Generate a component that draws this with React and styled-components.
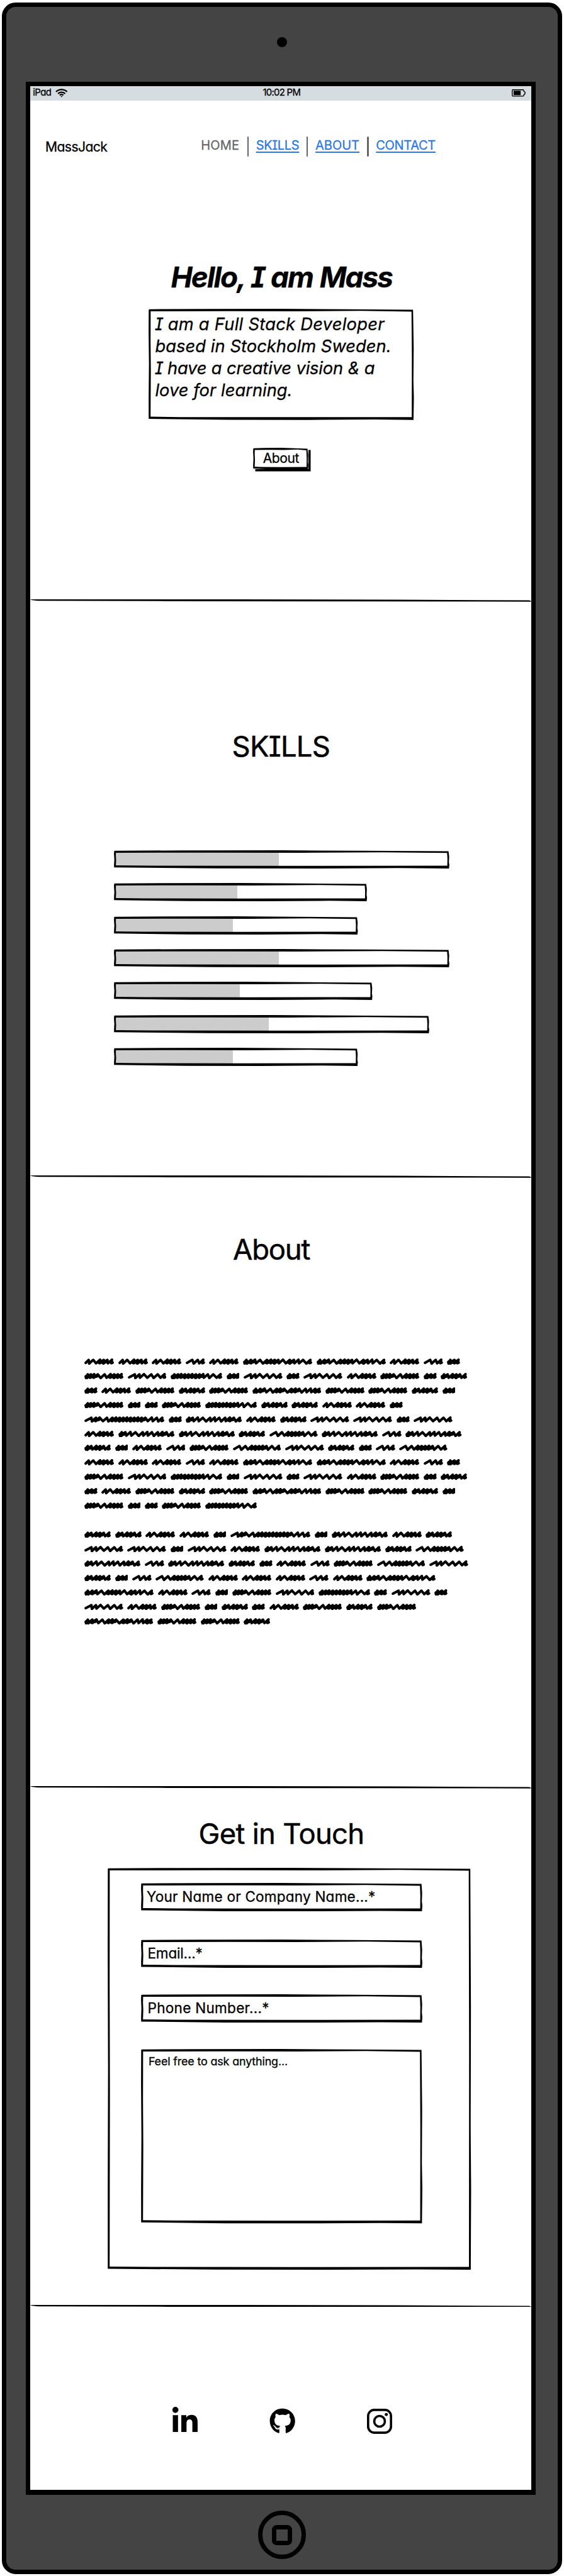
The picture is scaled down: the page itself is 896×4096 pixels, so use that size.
import React from "react";
import styled, { createGlobalStyle, css } from "styled-components";
import { FaGithub, FaLinkedinIn } from "react-icons/fa";

const SCALE = 0.727;
const u = (n) => `${+(n * SCALE).toFixed(2)}px`;

const GlobalStyle = createGlobalStyle`
  *, *::before, *::after { box-sizing: border-box; }
  body {
    margin: 0;
    background: #fff;
    color: #000;
    font-family: Inter, Lato, sans-serif;
    font-feature-settings: "cv11", "cv08", "calt" 0;
    -webkit-text-stroke: 0.3px currentColor;
  }
  h1, h2 { margin: 0; padding: 0; font-weight: 400; }
`;

const Page = styled.div`
  width: 896px;
  height: 4096px;
  padding: ${u(6)} ${u(4)} ${u(4)};
`;

const Device = styled.div`
  height: 100%;
  display: flex;
  flex-direction: column;
  background: #444;
  border: 7px solid #000;
  border-radius: ${u(30)};
`;

const TopBezel = styled.div`
  flex: none;
  height: 118.3px;
  padding-bottom: ${u(10)};
  display: flex;
  align-items: center;
  justify-content: center;
`;

const Camera = styled.div`
  width: ${u(22)};
  height: ${u(22)};
  border-radius: 50%;
  background: #000;
`;

const Screen = styled.main`
  flex: none;
  height: 3837.5px;
  margin: 0 35.5px 0 31.1px;
  border: 7px solid #000;
  border-bottom-width: 8px;
  background: #fff;
`;

const BottomBezel = styled.div`
  flex: 1;
  display: flex;
  align-items: center;
  justify-content: center;
  padding-top: ${u(11)};
`;

const HomeButton = styled.div`
  width: ${u(105)};
  height: ${u(105)};
  border: 7px solid #000;
  border-radius: 50%;
  display: flex;
  align-items: center;
  justify-content: center;
`;

const HomeGlyph = styled.div`
  width: ${u(44)};
  height: ${u(44)};
  border: 7px solid #000;
  border-radius: ${u(10)};
`;

const StatusBar = styled.div`
  height: ${u(32)};
  padding: 0 ${u(2)} 0 ${u(6)};
  display: grid;
  grid-template-columns: 1fr auto 1fr;
  align-items: center;
  background: #d6dde0;
  font-size: ${u(20.5)};
  line-height: ${u(30)};
`;

const Carrier = styled.div`
  display: flex;
  align-items: center;
  gap: ${u(9)};
`;

const BatterySlot = styled.div`
  display: flex;
  justify-content: flex-end;
  padding-right: ${u(10)};
`;

const Section = styled.section`
  height: ${(p) => u(p.$height)};
  display: flex;
  flex-direction: column;
`;

const NavBar = styled.header`
  margin-top: ${u(78)};
  height: ${u(44)};
  display: flex;
  align-items: center;
`;

const Brand = styled.div`
  width: ${u(373)};
  padding: ${u(2)} 0 0 ${u(33)};
  font-size: ${u(29)};
`;

const NavLinks = styled.nav`
  display: flex;
  align-items: center;
`;

const NavLink = styled.a`
  width: ${(p) => u(p.$width)};
  margin-top: ${u(-3)};
  font-size: ${u(27.5)};
  line-height: ${u(36)};
  white-space: nowrap;
  color: #666;
  ${(p) =>
    p.$active &&
    css`
      color: #2b78e4;
      text-decoration: underline;
      text-decoration-thickness: 2px;
      text-underline-offset: ${u(3.6)};
      text-decoration-skip-ink: none;
    `}
`;

const NavRule = styled.span`
  width: ${u(3.4)};
  height: ${u(44)};
  margin: 0 ${u(16)} 0 ${u(17.5)};
  border-radius: 2px;
  background: #666;
`;

const Tracked = styled.span`
  white-space: pre;
  letter-spacing: ${(p) => p.$by}px;
`;

const HeroTitle = styled.h1`
  margin-top: ${u(225)};
  text-align: center;
  padding-left: ${u(4)};
  font-size: ${u(63)};
  font-weight: 700;
  font-style: italic;
  line-height: ${u(80)};
  word-spacing: 2px;
`;

const Sketched = styled.div`
  position: relative;
  flex: none;
  width: ${(p) => u(p.$w)};
  height: ${(p) => u(p.$h)};
`;

const SketchSvg = styled.svg`
  position: absolute;
  inset: 0;
  width: 100%;
  height: 100%;
  overflow: visible;
  pointer-events: none;
`;

/* Slightly wobbly pen outline of a box. */
function SketchOutline({ w, h, t }) {
  const outer = `M1.5 1 L${w * 0.2} .3 L${w * 0.5} 0 L${w * 0.75} 1.2 L${w - 2} 2
    L${w - 0.6} ${h * 0.35} L${w - 1.2} ${h * 0.65} L${w - 0.2} ${h * 0.8} L${w - 1} ${h}
    L${w * 0.85} ${h - 0.8} L${w * 0.6} ${h} L${w * 0.3} ${h - 0.2} L0.3 ${h - 2.2}
    L0.2 ${h * 0.8} L0.9 ${h * 0.5} L0.1 ${h * 0.2} L0.4 2 Z`;
  const inner = `M${t} ${t + 1} L${w * 0.3} ${t + 0.7} L${w * 0.55} ${t + 1} L${w * 0.8} ${t} L${w - t - 0.8} ${t + 1.6}
    L${w - t} ${h * 0.45} L${w - t - 0.3} ${h - t - 1.6} L${w * 0.5} ${h - t - 1.4} L${w * 0.12} ${h - t - 1.6}
    L${t - 0.2} ${h - t - 2.4} L${t + 0.4} ${h * 0.55} L${t - 0.2} ${h * 0.3} Z`;
  return (
    <SketchSvg viewBox={`0 0 ${w} ${h}`} preserveAspectRatio="none" aria-hidden="true">
      <path d={`${outer} ${inner}`} fillRule="evenodd" />
    </SketchSvg>
  );
}

const BioBox = styled(Sketched)`
  margin: ${u(29)} 0 0 ${u(259)};
  padding: ${u(9)} 0 0 ${u(14)};
  font-size: ${u(37.5)};
  font-style: italic;
  line-height: ${u(48.3)};
`;

const BioLine = styled.div`
  white-space: pre;
`;

const AboutButton = styled(Sketched)`
  margin: ${u(60)} 0 0 ${u(487.5)};
  display: flex;
  align-items: center;
  justify-content: center;
  background: #fff;
  box-shadow: ${u(4.8)} ${u(4.8)} 0 #000;
  font-size: ${u(29)};
`;

const Heading = styled.h2`
  margin-top: ${(p) => u(p.$top)};
  padding-left: ${(p) => u(p.$left)};
  font-size: ${u(62.5)};
  line-height: ${u(80)};
  white-space: nowrap;
  -webkit-text-stroke-width: 0.5px;
`;

const RuleSvg = styled.svg`
  display: block;
  width: 100%;
  height: ${u(5)};
`;

function Divider() {
  return (
    <RuleSvg viewBox="0 0 1094 5" preserveAspectRatio="none" aria-hidden="true">
      <path d="M0 0 L450 0 L800 .7 L1090 2.2 L1094 3.4 L1094 5 L700 4.4 L300 4 L16 3.2 L4 1.8 Z" />
    </RuleSvg>
  );
}

const Bars = styled.div`
  margin: ${u(187)} 0 0 ${u(182.3)};
  display: flex;
  flex-direction: column;
  gap: ${u(32.2)};
`;

const Bar = styled(Sketched)`
  padding: ${u(4)} ${u(4)};
`;

const BarFill = styled.div`
  height: 100%;
  background: #ccc;
`;

/* Outer width and fill extent of each skill bar. */
const SKILLS = [
  [733.2, 360.7],
  [553.3, 270.6],
  [533.2, 260.5],
  [733.2, 360.7],
  [565, 276.4],
  [689.2, 338.5],
  [533.2, 260.5],
];

/* Scribbled filler words: width and the x of every pen peak. */
const WORDS = {
  a: [64.9, [10, 20, 35, 43, 51, 61]],
  b: [42.5, [15, 27, 39]],
  c: [151.5, [8, 18, 27, 38, 53, 62, 70, 78, 88, 103, 112, 122, 132, 148]],
  d: [28.7, [8, 17, 26]],
  e: [85.5, [8, 15, 22, 30, 45, 58, 66, 74, 82]],
  f: [85, [16, 26, 36, 52, 66, 81]],
  g: [113, [9, 17, 24, 32, 40, 48, 56, 64, 72, 82, 94, 110]],
  h: [58, [8, 16, 27, 35, 43, 55]],
  i: [150.5, [8, 18, 27, 40, 54, 62, 70, 86, 95, 103, 117, 128, 138, 147]],
  j: [175, [16, 26, 34, 50, 62, 70, 78, 86, 94, 102, 110, 118, 126, 134, 148, 159, 171]],
  k: [123, [8, 16, 27, 38, 54, 64, 74, 87, 97, 106, 119]],
  l: [105.6, [15, 28, 42, 50, 58, 66, 74, 86, 101]],
};

const PARAGRAPHS = [
  [
    "aaabaccabd",
    "efgdfdfaedh",
    "daeheieehd",
    "eddeghhaad",
    "jdkahffdf",
    "akkhlkbk",
    "hdabelfhdbl",
    "aaabaccabd",
    "efgdfdfaedh",
    "daeheieehd",
    "eddeg",
  ],
  ["hhaadjdkah", "ffdfakkhl", "kbkhdabelf", "hdblaaabac", "cabdefgdfd", "faedhdaehe", "ieeh"],
];

const ScribbleBlock = styled.div`
  margin: ${u(189)} 0 0 ${u(118.3)};
  display: flex;
  flex-direction: column;
  gap: ${u(31.6)};
`;

const ScribbleLine = styled.div`
  height: ${u(31.6)};
  display: flex;
  align-items: center;
  gap: ${u(8.9)};
`;

const WordSvg = styled.svg`
  flex: none;
  height: ${u(14)};
  width: ${(p) => u(p.$w)};
`;

function ScribbleWord({ kind }) {
  const [w, peaks] = WORDS[kind];
  const dense = peaks[0] < 10;
  let line = dense ? "M3.6 11 L3.6 9" : "M3 9.6";
  let blob = dense ? "M4.5 8 L8 7" : "";
  peaks.forEach((x, i) => {
    const prev = i ? peaks[i - 1] : 0;
    if (i) line += ` L${Math.max(x - 9.5, prev - 5)} ${i % 3 === 1 ? 11.2 : 10.6}`;
    line += ` L${x - 0.6} ${i % 3 === 2 ? 2.8 : 3.2}`;
    if (i && x - prev < 9.5) blob += ` M${prev - 3} 8 L${x - 3} 6.6`;
  });
  line += ` L${w - 6} 10.4 L${w - 3} 9`;
  return (
    <WordSvg $w={w} viewBox={`0 0 ${w} 14`} aria-hidden="true">
      <g fill="none" stroke="#000" strokeLinecap="round" strokeLinejoin="round">
        <path d={line} strokeWidth="5.6" />
        <path d={blob} strokeWidth="8.4" />
      </g>
    </WordSvg>
  );
}

const ContactForm = styled(Sketched)`
  margin: ${u(35)} 0 0 ${u(169)};
  padding: ${u(32)} 0 0 ${u(73.5)};
`;

const Field = styled(Sketched)`
  margin-bottom: ${(p) => u(p.$gap)};
  padding: ${u(9.5)} 0 0 ${(p) => u(p.$indent)};
  font-size: ${u(31)};
  line-height: ${u(40)};
  white-space: nowrap;
`;

const MessageField = styled(Sketched)`
  padding: ${u(11)} 0 0 ${u(16)};
  font-size: ${u(24.6)};
  line-height: ${u(32)};
  white-space: nowrap;
`;

const Socials = styled.div`
  margin: ${u(222)} 0 0 ${u(310)};
  height: ${u(56)};
  display: flex;
  align-items: center;
  gap: ${u(157)};
`;

const SocialLink = styled.a`
  flex: none;
  width: ${u(56)};
  height: ${u(56)};
  display: flex;
  align-items: center;
  justify-content: center;
  color: #000;
  svg { display: block; flex: none; }
`;

function WifiIcon() {
  return (
    <svg width={27 * SCALE} height={19 * SCALE} viewBox="0 0 27 19" fill="none" stroke="#000" strokeWidth="3.2" aria-hidden="true">
      <path d="M1.4 6.8 C8 .2 19 .2 25.6 6.8" />
      <path d="M5.6 10.8 C10 6.6 17 6.6 21.4 10.8" />
      <path d="M9.4 14.4 C11.8 12.2 15.2 12.2 17.6 14.4" />
      <path d="M11.2 16.2 L13.5 18.8 L15.8 16.2 Z" fill="#000" stroke="none" />
    </svg>
  );
}

function BatteryIcon() {
  return (
    <svg width={30 * SCALE} height={16 * SCALE} viewBox="0 0 30 16" aria-hidden="true">
      <path d="M2 1 H25 L26.5 3 V4.5 L29 6 V10 L26.5 11.5 V13.5 L25 15 H2 L1 13 V3 Z" fill="none" stroke="#000" strokeWidth="1.9" />
      <rect x="4" y="3.2" width="15.5" height="9.6" />
    </svg>
  );
}

function InstagramIcon() {
  return (
    <svg width={55 * SCALE} height={55 * SCALE} viewBox="0 0 55 55" fill="none" stroke="#000" strokeWidth="5" aria-hidden="true">
      <rect x="2.5" y="2.5" width="50" height="50" rx="13.5" />
      <circle cx="27.5" cy="27.5" r="11.7" />
      <circle cx="42.2" cy="12.8" r="3.4" fill="#000" stroke="none" />
    </svg>
  );
}

export default function App() {
  return (
    <>
      <GlobalStyle />
      <Page>
        <Device>
          <TopBezel>
            <Camera />
          </TopBezel>
          <Screen>
            <StatusBar>
              <Carrier>
                <Tracked $by={-0.6}>iPad</Tracked>
                <WifiIcon />
              </Carrier>
              <Tracked $by={-0.7}>10:02 PM</Tracked>
              <BatterySlot>
                <BatteryIcon />
              </BatterySlot>
            </StatusBar>

            <Section $height={1091}>
              <NavBar>
                <Brand><Tracked $by={-0.55}>MassJack</Tracked></Brand>
                <NavLinks>
                  <NavLink $width={83.5}><Tracked $by={0.2}>HOME</Tracked></NavLink>
                  <NavRule />
                  <NavLink $active $width={93}><Tracked $by={-0.3}>SKILLS</Tracked></NavLink>
                  <NavRule />
                  <NavLink $active $width={95.5}><Tracked $by={0}>ABOUT</Tracked></NavLink>
                  <NavRule />
                  <NavLink $active $width={131}><Tracked $by={-0.3}>CONTACT</Tracked></NavLink>
                </NavLinks>
              </NavBar>
              <HeroTitle><Tracked $by={-1.9}>Hello, I am Mass</Tracked></HeroTitle>
              <BioBox $w={580} $h={243}>
                <SketchOutline w={580} h={243} t={4.6} />
                <BioLine><Tracked $by={0.29}>I am a Full Stack Developer</Tracked></BioLine>
                <BioLine><Tracked $by={0.08}>based in Stockholm Sweden.</Tracked></BioLine>
                <BioLine><Tracked $by={-0.12}>I have a creative vision &amp; a</Tracked></BioLine>
                <BioLine><Tracked $by={0.04}>love for learning.</Tracked></BioLine>
              </BioBox>
              <AboutButton $w={121} $h={47.5}>
                <SketchOutline w={121} h={47.5} t={3.8} />
                <Tracked $by={-0.4}>About</Tracked>
              </AboutButton>
            </Section>
            <Divider />

            <Section $height={1255}>
              <Heading $top={277} $left={441}><Tracked $by={-0.8}>SKILLS</Tracked></Heading>
              <Bars>
                {SKILLS.map(([w, fill], i) => (
                  <Bar key={i} $w={w} $h={39.8}>
                    <BarFill style={{ width: u(fill - 4) }} />
                    <SketchOutline w={w} h={39.8} t={4.4} />
                  </Bar>
                ))}
              </Bars>
            </Section>
            <Divider />

            <Section $height={1331}>
              <Heading $top={117} $left={443}><Tracked $by={-1.2}>About</Tracked></Heading>
              <ScribbleBlock>
                {PARAGRAPHS.map((lines, i) => (
                  <div key={i}>
                    {lines.map((line, j) => (
                      <ScribbleLine key={j}>
                        {[...line].map((kind, k) => (
                          <ScribbleWord key={k} kind={kind} />
                        ))}
                      </ScribbleLine>
                    ))}
                  </div>
                ))}
              </ScribbleBlock>
            </Section>
            <Divider />

            <Section $height={1129}>
              <Heading $top={59} $left={368}><Tracked $by={-0.7}>Get in Touch</Tracked></Heading>
              <ContactForm $w={794.5} $h={879}>
                <SketchOutline w={794.5} h={879} t={4.6} />
                <Field $w={615} $h={62} $gap={62.2} $indent={12}>
                  <SketchOutline w={615} h={62} t={4.6} />
                  <Tracked $by={0.22}>Your Name or Company Name...*</Tracked>
                </Field>
                <Field $w={615} $h={62} $gap={58} $indent={14}>
                  <SketchOutline w={615} h={62} t={4.6} />
                  <Tracked $by={-0.17}>Email...*</Tracked>
                </Field>
                <Field $w={615} $h={62} $gap={58} $indent={14}>
                  <SketchOutline w={615} h={62} t={4.6} />
                  <Tracked $by={0.29}>Phone Number...*</Tracked>
                </Field>
                <MessageField $w={615} $h={381.5}>
                  <SketchOutline w={615} h={381.5} t={4.6} />
                  <Tracked $by={-0.13}>Feel free to ask anything...</Tracked>
                </MessageField>
              </ContactForm>
            </Section>
            <Divider />

            <Section as="footer" $height={400}>
              <Socials>
                <SocialLink><FaLinkedinIn size={63 * SCALE} /></SocialLink>
                <SocialLink><FaGithub size={57 * SCALE} /></SocialLink>
                <SocialLink><InstagramIcon /></SocialLink>
              </Socials>
            </Section>
          </Screen>
          <BottomBezel>
            <HomeButton>
              <HomeGlyph />
            </HomeButton>
          </BottomBezel>
        </Device>
      </Page>
    </>
  );
}
